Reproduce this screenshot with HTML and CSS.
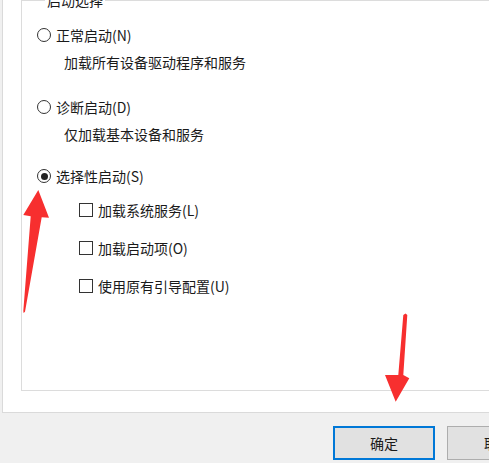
FILE: index.html
```html
<!DOCTYPE html>
<html lang="zh-CN">
<head>
<meta charset="utf-8">
<title>系统配置</title>
<link rel="stylesheet" href="styles.css">
</head>
<body>
<div class="screen">
  <div class="tabpage">
    <fieldset class="group">
      <legend class="group-title">启动选择</legend>
      <label class="option"><input type="radio" name="boot" class="radio"><span>正常启动(N)</span></label>
      <div class="desc">加载所有设备驱动程序和服务</div>
      <label class="option option-gap-a"><input type="radio" name="boot" class="radio"><span>诊断启动(D)</span></label>
      <div class="desc">仅加载基本设备和服务</div>
      <label class="option option-gap-b"><input type="radio" name="boot" class="radio" checked><span>选择性启动(S)</span></label>
      <div class="checks">
        <label class="check"><input type="checkbox" class="box"><span>加载系统服务(L)</span></label>
        <label class="check"><input type="checkbox" class="box"><span>加载启动项(O)</span></label>
        <label class="check"><input type="checkbox" class="box"><span>使用原有引导配置(U)</span></label>
      </div>
    </fieldset>
  </div>
  <div class="footer">
    <button class="btn btn-default">确定</button>
    <button class="btn">取消</button>
  </div>
  <svg class="arrows" width="489" height="463" viewBox="0 0 489 463">
    <polygon points="38.3,190 49,217.7 41.7,217.2 25,311.7 23.6,313 23.3,311 30.7,216.3 23.3,215" fill="#f72f2f"/>
    <polygon points="407.3,315 403.3,375 409.3,378.3 395.7,401.7 385,375 398.3,375 403.3,315 405.5,313.5" fill="#f72f2f"/>
  </svg>
</div>
</body>
</html>
```
FILE: styles.css
```css
* { box-sizing: border-box; }
html, body {
  margin: 0;
  padding: 0;
  width: 489px;
  height: 463px;
  overflow: hidden;
  background: #f0f0f0;
}
body {
  font-family: "Noto Sans CJK SC", "Noto Sans", sans-serif;
  font-size: 14px;
  color: #1a1a1a;
}
.screen {
  position: relative;
  width: 489px;
  height: 463px;
  overflow: hidden;
}
.tabpage {
  margin: -20px -60px 0 2px;
  padding: 10px 0 21px 18px;
  background: #fff;
  border-left: 1px solid #dadada;
  border-bottom: 1px solid #dadada;
}
.group {
  margin: 0 -40px 0 0;
  padding: 15px 0 94px 15px;
  border: 1px solid #dcdcdc;
  display: flex;
  flex-direction: column;
  align-items: flex-start;
  min-width: 0;
}
.group-title {
  margin-left: 8px;
  padding: 0 2px;
  line-height: 20px;
}
.option, .check {
  display: flex;
  align-items: center;
  height: 20px;
  line-height: 20px;
  gap: 5px;
}
.option-gap-a { margin-top: 25px; }
.option-gap-b { margin-top: 22px; }
.desc {
  margin-top: 7px;
  margin-left: 27px;
  height: 20px;
  line-height: 20px;
}
.radio {
  appearance: none;
  -webkit-appearance: none;
  margin: 0;
  width: 14px;
  height: 14px;
  border: 1px solid #333;
  border-radius: 50%;
  background: #fff;
  display: grid;
  place-items: center;
}
.radio:checked::after {
  content: "";
  width: 7px;
  height: 7px;
  border-radius: 50%;
  background: #222;
}
.checks {
  display: flex;
  flex-direction: column;
  gap: 18px;
  margin-top: 14px;
  margin-left: 42px;
}
.box {
  appearance: none;
  -webkit-appearance: none;
  margin: 0;
  width: 14px;
  height: 14px;
  border: 1px solid #333;
  background: #fff;
}
.footer {
  display: flex;
  gap: 12px;
  padding: 13px 0 0 333px;
}
.btn {
  flex: 0 0 102px;
  height: 34px;
  font-family: inherit;
  font-size: 14px;
  color: #1a1a1a;
  background: #e1e1e1;
  border: 1px solid #adadad;
  padding: 0;
}
.btn-default {
  border: 2px solid #0078d7;
}
.arrows {
  position: absolute;
  left: 0;
  top: 0;
  pointer-events: none;
}
```
